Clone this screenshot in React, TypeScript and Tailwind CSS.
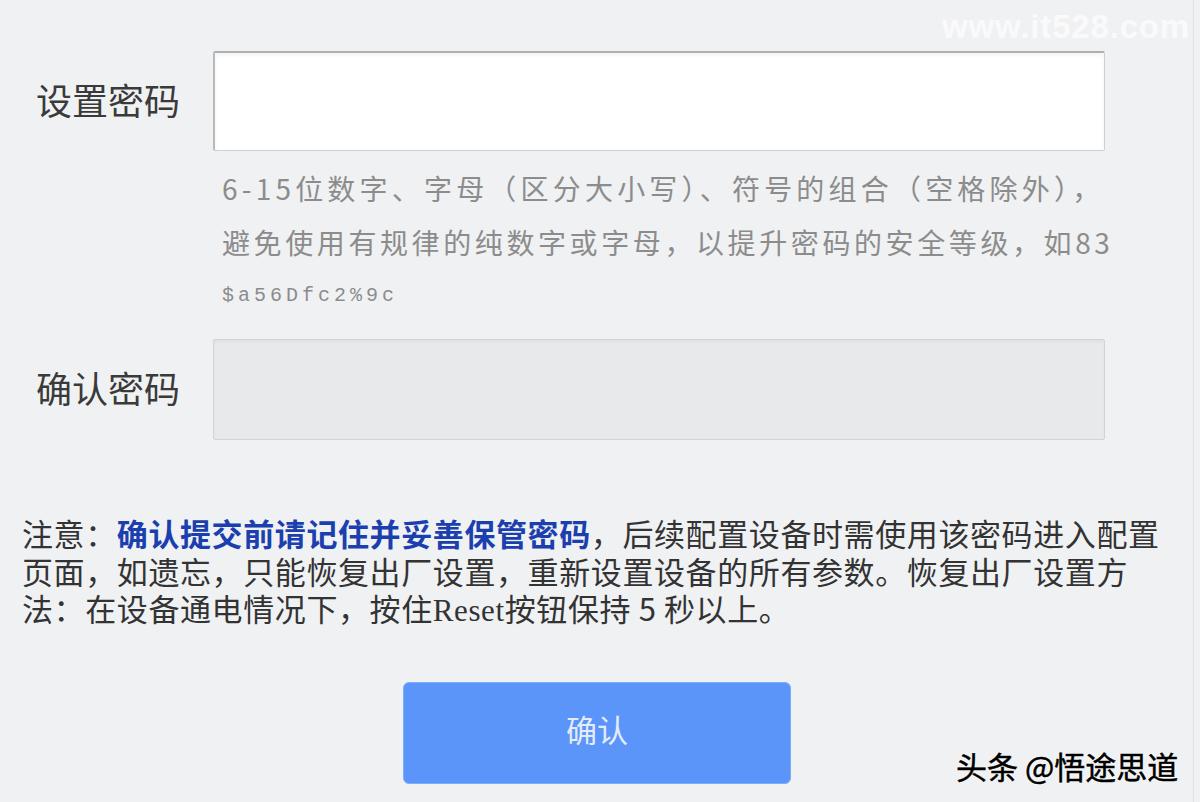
import React from "react";

const cjk = "font-['Noto_Sans_CJK_SC','Noto_Sans',sans-serif]";

function Field({ label, children, disabled }: { label: string; children?: React.ReactNode; disabled?: boolean }) {
  return (
    <div className="flex items-start">
      <div className="w-[213px] shrink-0 pl-[36px] h-[96px] flex items-center text-[36px] leading-none text-[#3a3a3a]">
        {label}
      </div>
      <div className="w-[892px]">
        <div
          className={
            disabled
              ? "h-[101px] rounded-[2px] border border-[#d2d3d6] bg-[#e8e9eb] shadow-[inset_0_2px_3px_rgba(0,0,0,0.04)]"
              : "h-[100px] rounded-[2px] border border-[#cfd0d2] border-t-[#aeb0b2] border-l-[#b8babc] border-t-2 border-l-2 bg-white shadow-[inset_0_2px_4px_rgba(0,0,0,0.05)]"
          }
        />
        {children}
      </div>
    </div>
  );
}

export default function App() {
  return (
    <div className={`relative w-[1200px] h-[802px] overflow-hidden bg-[#f0f1f3] ${cjk}`}>
      <div className="absolute right-[10px] top-[2px] text-[33px] font-bold tracking-wide text-white/70 font-['Liberation_Sans',sans-serif]">
        www.it528.com
      </div>

      <div className="pt-[51px]">
        <Field label="设置密码">
          <div className="mt-[10px] pl-[9px] text-[28px] leading-[54px] tracking-[3.6px] text-[#8c8c8c] whitespace-nowrap">
            <div className="tracking-[4.2px]">6-15位数字、字母（区分大小写）、符号的组合（空格除外），</div>
            <div>避免使用有规律的纯数字或字母，以提升密码的安全等级，如83</div>
            <div className="font-['Liberation_Mono',monospace] text-[20px] tracking-[4px]">$a56Dfc2%9c</div>
          </div>
        </Field>

        <div className="mt-[16px]">
          <Field label="确认密码" disabled />
        </div>

        <div className="mt-[74px] pl-[22px] text-[31px] leading-[37.5px] tracking-[0.6px] text-[#333] whitespace-nowrap">
          <div>
            注意：<span className="text-[#1b3fae] font-semibold">确认提交前请记住并妥善保管密码</span>，后续配置设备时需使用该密码进入配置
          </div>
          <div>页面，如遗忘，只能恢复出厂设置，重新设置设备的所有参数。恢复出厂设置方</div>
          <div>
            法：在设备通电情况下，按住<span className="font-['Liberation_Serif',serif]">Reset</span>按钮保持 5 秒以上。
          </div>
        </div>

        <div className="mt-[52px] pl-[403px]">
          <button className="w-[388px] h-[102px] rounded-[6px] bg-[#5b95fa] border border-[#7aaefc] pb-[6px] text-[31px] text-[#e4ecfb] flex items-center justify-center">
            确认
          </button>
        </div>
      </div>

      <div className="absolute left-[956px] top-[743px] text-[31px] text-black [-webkit-text-stroke:0.5px_black] [text-shadow:0_0_2px_#fff,0_0_2px_#fff,0_0_2px_#fff]">
        头条 @悟途思道
      </div>
      <div className="absolute right-[6px] top-0 h-full w-px bg-[#e2e3e5]" />
    </div>
  );
}
